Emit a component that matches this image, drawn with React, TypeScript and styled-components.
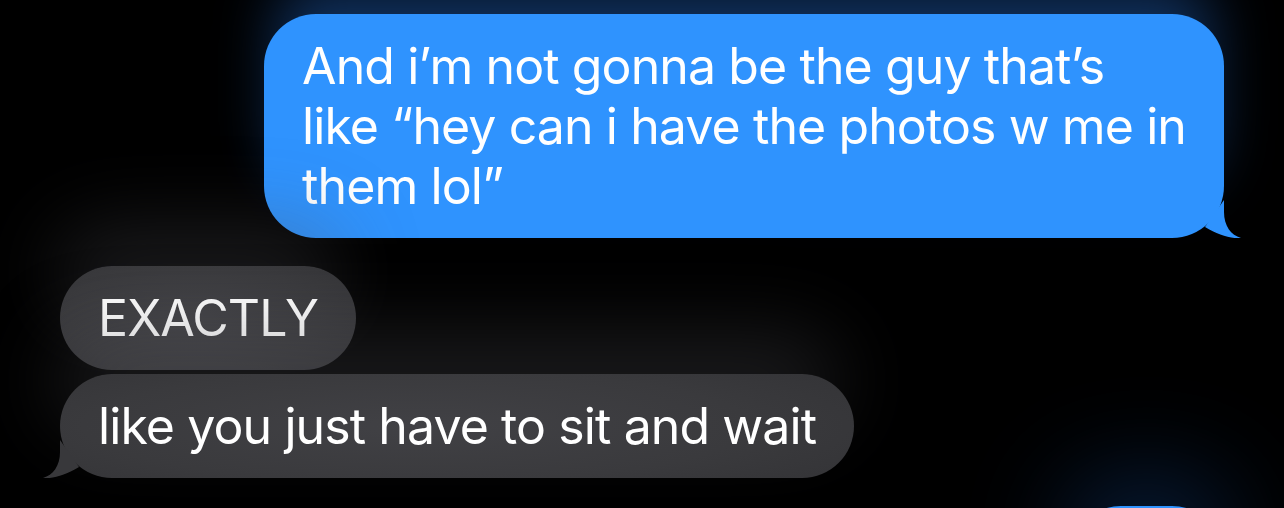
import styled, { createGlobalStyle } from 'styled-components';

const BLUE = '#2f93fe';
const GRAY = '#3a3a3d';

const GlobalStyle = createGlobalStyle`
  html, body {
    margin: 0;
    padding: 0;
    background: #000;
    overflow: hidden;
  }

  body {
    font-family: Inter, "Liberation Sans", sans-serif;
    -webkit-font-smoothing: antialiased;
  }
`;

type Side = 'me' | 'them';

const Tail = ({ side }: { side: Side }) => (
  <TailSvg $side={side} width="37" height="40" viewBox="0 0 37 40" aria-hidden>
    <path
      d="M20 2 L20 14 C20 28 27 37 37 40 C27 41 14 37 1 29 Z"
      fill={side === 'me' ? BLUE : '#38383b'}
    />
  </TailSvg>
);

const App = () => {
  return (
    <>
      <GlobalStyle />
      <Thread>
        <Group $side="me">
          <Bubble $side="me">
            And i’m not gonna be the guy that’s
            <br />
            like “hey can i have the photos w me in
            <br />
            them lol”
            <Tail side="me" />
          </Bubble>
        </Group>
        <Group $side="them">
          <Bubble $side="them">EXACTLY</Bubble>
          <Bubble $side="them">
            like you just have to sit and wait
            <Tail side="them" />
          </Bubble>
        </Group>
        <Group $side="me">
          <Bubble $side="me" $width={155} $faint aria-label="next message" />
        </Group>
      </Thread>
    </>
  );
};

const Thread = styled.main`
  display: flex;
  flex-direction: column;
  gap: 28px;
  height: 508px;
  padding: 14px 60px 0;
  box-sizing: border-box;
  overflow: hidden;
`;

const Group = styled.section<{ $side: Side }>`
  display: flex;
  flex-direction: column;
  align-items: ${({ $side }) => ($side === 'me' ? 'flex-end' : 'flex-start')};
  gap: 4px;
`;

const Bubble = styled.div<{ $side: Side; $width?: number; $faint?: boolean }>`
  position: relative;
  flex-shrink: 0;
  box-sizing: border-box;
  width: ${({ $width }) => ($width ? `${$width}px` : 'auto')};
  min-height: 104px;
  padding: 22px 38px;
  border-radius: 52px;
  font-size: 50px;
  line-height: 60px;
  letter-spacing: -0.9px;
  color: #fff;
  white-space: nowrap;
  background: ${({ $side }) =>
    $side === 'me'
      ? BLUE
      : `radial-gradient(ellipse 70% 90% at 45% 50%, #414145 0%, ${GRAY} 60%, #333336 100%)`};
  box-shadow: ${({ $side, $faint }) =>
    $faint
      ? '0 -20px 110px 0 rgba(30, 100, 200, 0.38)'
      : $side === 'me'
        ? '0 -44px 60px -12px rgba(40, 120, 230, 0.4)'
        : '-10px -46px 80px -4px rgba(80, 80, 84, 0.34)'};
`;

const TailSvg = styled.svg<{ $side: Side }>`
  position: absolute;
  bottom: 0;
  ${({ $side }) =>
    $side === 'me'
      ? 'right: -17px;'
      : 'left: -17px; transform: scaleX(-1);'}
`;

export default App;
